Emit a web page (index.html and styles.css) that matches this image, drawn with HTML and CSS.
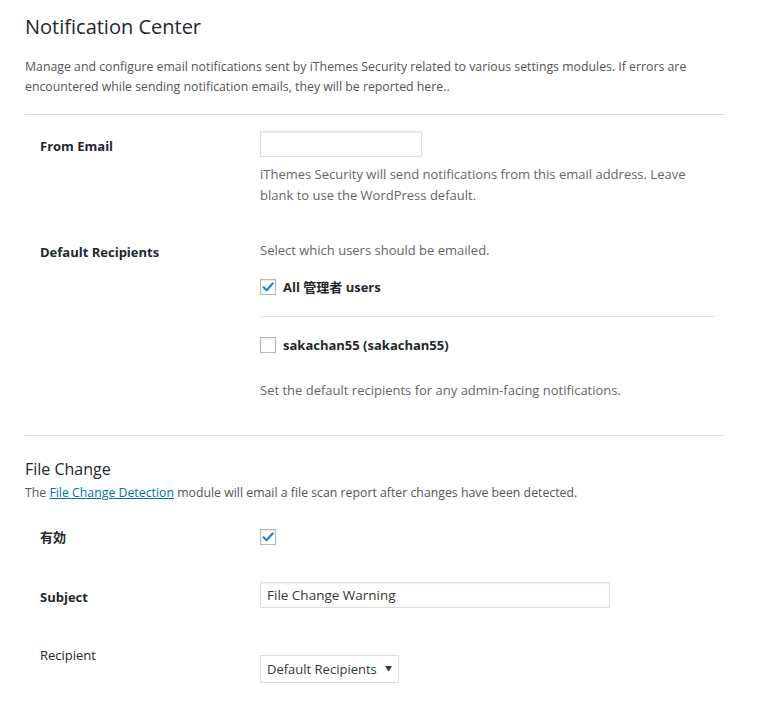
FILE: index.html
```html
<!DOCTYPE html>
<html lang="en">
<head>
<meta charset="utf-8">
<title>Notification Center</title>
<link rel="stylesheet" href="styles.css">
</head>
<body>
<div class="wrap">
  <h1 class="title">Notification Center</h1>
  <p class="intro">Manage and configure email notifications sent by iThemes Security related to various settings modules. If errors are encountered while sending notification emails, they will be reported here..</p>
  <hr class="sep">

  <div class="form-table">
    <div class="row row-from">
      <div class="label">From Email</div>
      <div class="field">
        <input class="text-input from-input" type="text">
        <p class="desc">iThemes Security will send notifications from this email address. Leave blank to use the WordPress default.</p>
      </div>
    </div>

    <div class="row row-recipients">
      <div class="label">Default Recipients</div>
      <div class="field">
        <p class="desc select-note">Select which users should be emailed.</p>
        <label class="check-line">
          <span class="checkbox checked"><svg viewBox="0 0 16 16" width="16" height="16"><path d="M3.6 8.2 L6.6 11.2 L12.6 4.4" fill="none" stroke="#1e8cbe" stroke-width="2.2" stroke-linecap="round" stroke-linejoin="round"/></svg></span>
          <span class="check-text">All 管理者 users</span>
        </label>
        <hr class="inner-sep">
        <label class="check-line">
          <span class="checkbox"></span>
          <span class="check-text">sakachan55 (sakachan55)</span>
        </label>
        <p class="desc recip-note">Set the default recipients for any admin-facing notifications.</p>
      </div>
    </div>
  </div>

  <hr class="sep sep-2">

  <h3 class="section-title">File Change</h3>
  <p class="section-desc">The <a href="#" class="link">File Change Detection</a> module will email a file scan report after changes have been detected.</p>

  <div class="form-table">
    <div class="row row-enabled">
      <div class="label label-cjk">有効</div>
      <div class="field">
        <span class="checkbox checked"><svg viewBox="0 0 16 16" width="16" height="16"><path d="M3.6 8.2 L6.6 11.2 L12.6 4.4" fill="none" stroke="#1e8cbe" stroke-width="2.2" stroke-linecap="round" stroke-linejoin="round"/></svg></span>
      </div>
    </div>
    <div class="row row-subject">
      <div class="label">Subject</div>
      <div class="field">
        <input class="text-input subject-input" type="text" value="File Change Warning">
      </div>
    </div>
    <div class="row row-recipient">
      <div class="label label-normal">Recipient</div>
      <div class="field">
        <div class="select">
          <span class="select-text">Default Recipients</span>
          <span class="select-arrow">▼</span>
        </div>
      </div>
    </div>
  </div>
</div>
</body>
</html>
```

FILE: styles.css
```css
* { box-sizing: border-box; }
html, body { margin: 0; padding: 0; background: #fff; }
body {
  font-family: "Open Sans", "Noto Sans CJK JP", sans-serif;
  color: #444;
  font-size: 13px;
}
.wrap {
  width: 725px;
  padding: 14px 0 0 25px;
}
.title {
  margin: 0;
  font-size: 20px;
  line-height: 26px;
  font-weight: 400;
  color: #23282d;
}
.intro {
  margin: 17px 0 0;
  font-size: 12.3px;
  line-height: 20px;
  color: #555;
}
.sep {
  border: 0;
  border-top: 1px solid #ddd;
  margin: 17px 0 0;
  height: 0;
}
.form-table { display: flex; flex-direction: column; }
.row {
  display: grid;
  grid-template-columns: 220px 1fr;
  padding-left: 15px;
}
.label {
  font-size: 13px;
  font-weight: 700;
  color: #23282d;
  line-height: 18px;
}
.label-normal { font-weight: 400; }
.label-cjk { font-weight: 700; }
.field { padding-right: 10px; }
.desc {
  margin: 0;
  font-size: 13px;
  line-height: 21px;
  color: #666;
}
.text-input {
  display: block;
  height: 26px;
  border: 1px solid #ddd;
  box-shadow: inset 0 1px 2px rgba(0,0,0,.07);
  background: #fff;
  font-family: inherit;
  font-size: 13.5px;
  color: #32373c;
  padding: 0 6px;
  margin: 0;
  outline: none;
}
.from-input { width: 162px; }
.row-from { padding-top: 16px; }
.row-from .label { padding-top: 6px; }
.row-from .desc { margin-top: 7px; }
.row-recipients { padding-top: 28px; }
.row-recipients .label { padding-top: 9px; }
.select-note { margin-top: 0; padding-top: 6px; }
.check-line {
  display: flex;
  align-items: center;
  gap: 7px;
  margin-top: 17px;
}
.checkbox {
  display: block;
  width: 16px;
  height: 16px;
  border: 1px solid #b4b9be;
  background: #fff;
  box-shadow: inset 0 1px 2px rgba(0,0,0,.1);
  position: relative;
  flex: none;
}
.checkbox svg { position: absolute; left: -1px; top: -1px; }
.check-text {
  font-size: 13px;
  font-weight: 700;
  color: #23282d;
  line-height: 18px;
}
.inner-sep {
  border: 0;
  border-top: 1px solid #ddd;
  margin: 20px 0 0;
  height: 0;
}
.inner-sep + .check-line { margin-top: 19px; }
.recip-note { margin-top: 26px; }
.sep-2 { margin-top: 34px; }
.section-title {
  margin: 23px 0 0;
  font-size: 16px;
  font-weight: 400;
  line-height: 20px;
  color: #23282d;
}
.section-desc {
  margin: 5px 0 0;
  font-size: 12.3px;
  line-height: 18px;
  color: #555;
}
.link { color: #0073aa; text-decoration: underline; }
.row-enabled { padding-top: 26px; }
.row-enabled .label { padding-top: 0; }
.row-enabled .field { padding-top: 1px; }
.subject-input { width: 350px; }
.row-subject { padding-top: 36px; }
.row-subject .label { padding-top: 6px; }
.row-recipient { padding-top: 38px; }
.row-recipient .field { padding-top: 9px; }
.select {
  display: flex;
  align-items: center;
  justify-content: space-between;
  height: 28px;
  width: 139px;
  border: 1px solid #ddd;
  padding: 0 6px;
  font-size: 13px;
  color: #32373c;
  white-space: nowrap;
}
.select-arrow { font-size: 7px; color: #32373c; margin-top: -3px; }
```
